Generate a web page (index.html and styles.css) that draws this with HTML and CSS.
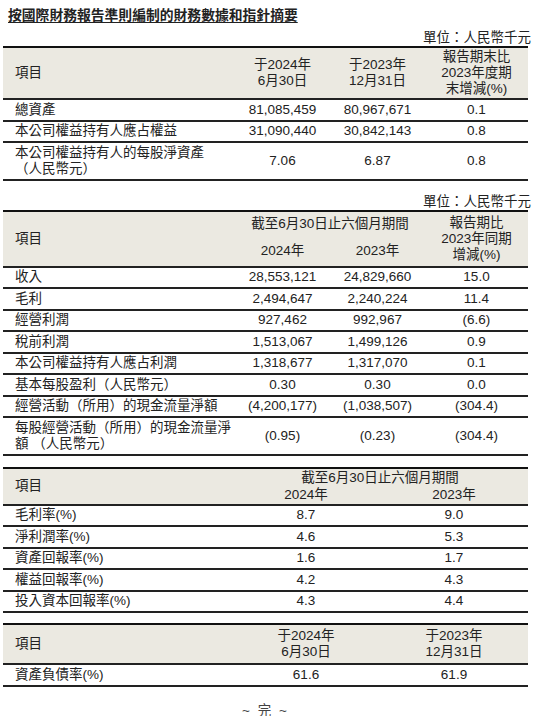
FILE: index.html
```html
<!DOCTYPE html>
<html lang="zh-Hant">
<head>
  <meta charset="UTF-8" />
  <meta name="viewport" content="width=device-width, initial-scale=1.0" />
  <title>財務數據和指針摘要</title>
  <link rel="stylesheet" href="styles.css">
</head>
<body>
  <div class="page">
    <h1 class="title">按國際財務報告準則編制的財務數據和指針摘要</h1>

    <!-- 資產 -->
    <div class="unit">單位：人民幣千元</div>
    <table class="fin four balance">
      <colgroup>
        <col class="c-label"><col class="c-num"><col class="c-num"><col class="c-chg">
      </colgroup>
      <thead>
        <tr>
          <th class="label">項目</th>
          <th>于2024年<br>6月30日</th>
          <th>于2023年<br>12月31日</th>
          <th>報告期末比<br>2023年度期<br>末增減(%)</th>
        </tr>
      </thead>
      <tbody>
        <tr><td class="label">總資產</td><td>81,085,459</td><td>80,967,671</td><td>0.1</td></tr>
        <tr><td class="label">本公司權益持有人應占權益</td><td>31,090,440</td><td>30,842,143</td><td>0.8</td></tr>
        <tr><td class="label">本公司權益持有人的每股淨資產<br>（人民幣元）</td><td>7.06</td><td>6.87</td><td>0.8</td></tr>
      </tbody>
    </table>

    <!-- 損益 -->
    <div class="unit second">單位：人民幣千元</div>
    <table class="fin four income">
      <colgroup>
        <col class="c-label"><col class="c-num"><col class="c-num"><col class="c-chg">
      </colgroup>
      <thead>
        <tr>
          <th class="label" rowspan="2">項目</th>
          <th colspan="2" class="period">截至6月30日止六個月期間</th>
          <th rowspan="2">報告期比<br>2023年同期<br>增減(%)</th>
        </tr>
        <tr>
          <th class="year">2024年</th>
          <th class="year">2023年</th>
        </tr>
      </thead>
      <tbody>
        <tr><td class="label">收入</td><td>28,553,121</td><td>24,829,660</td><td>15.0</td></tr>
        <tr><td class="label">毛利</td><td>2,494,647</td><td>2,240,224</td><td>11.4</td></tr>
        <tr><td class="label">經營利潤</td><td>927,462</td><td>992,967</td><td>(6.6)</td></tr>
        <tr><td class="label">稅前利潤</td><td>1,513,067</td><td>1,499,126</td><td>0.9</td></tr>
        <tr><td class="label">本公司權益持有人應占利潤</td><td>1,318,677</td><td>1,317,070</td><td>0.1</td></tr>
        <tr><td class="label">基本每股盈利（人民幣元）</td><td>0.30</td><td>0.30</td><td>0.0</td></tr>
        <tr><td class="label">經營活動（所用）的現金流量淨額</td><td>(4,200,177)</td><td>(1,038,507)</td><td>(304.4)</td></tr>
        <tr><td class="label">每股經營活動（所用）的現金流量淨<br>額 （人民幣元）</td><td>(0.95)</td><td>(0.23)</td><td>(304.4)</td></tr>
      </tbody>
    </table>

    <!-- 比率 -->
    <table class="fin three ratios">
      <colgroup>
        <col class="c-label3"><col class="c-val"><col class="c-val">
      </colgroup>
      <thead>
        <tr>
          <th class="label" rowspan="2">項目</th>
          <th colspan="2" class="period">截至6月30日止六個月期間</th>
        </tr>
        <tr>
          <th class="year">2024年</th>
          <th class="year">2023年</th>
        </tr>
      </thead>
      <tbody>
        <tr><td class="label">毛利率(%)</td><td>8.7</td><td>9.0</td></tr>
        <tr><td class="label">淨利潤率(%)</td><td>4.6</td><td>5.3</td></tr>
        <tr><td class="label">資產回報率(%)</td><td>1.6</td><td>1.7</td></tr>
        <tr><td class="label">權益回報率(%)</td><td>4.2</td><td>4.3</td></tr>
        <tr><td class="label">投入資本回報率(%)</td><td>4.3</td><td>4.4</td></tr>
      </tbody>
    </table>

    <!-- 負債 -->
    <table class="fin three gearing">
      <colgroup>
        <col class="c-label3"><col class="c-val"><col class="c-val">
      </colgroup>
      <thead>
        <tr>
          <th class="label">項目</th>
          <th>于2024年<br>6月30日</th>
          <th>于2023年<br>12月31日</th>
        </tr>
      </thead>
      <tbody>
        <tr><td class="label">資產負債率(%)</td><td>61.6</td><td>61.9</td></tr>
      </tbody>
    </table>

    <div class="end">~ 完 ~</div>
  </div>
</body>
</html>
```

FILE: styles.css
```css
* {
  box-sizing: border-box;
}

body {
  margin: 0;
  background: #fff;
  color: #222;
  font-family: "Liberation Sans", "Noto Sans CJK TC", sans-serif;
  font-size: 13.5px;
}

.page {
  width: 531px;
  padding: 8px 0 0 3px;
}

.title {
  margin: 0 0 0 5px;
  font-size: 13.8px;
  font-weight: bold;
  line-height: 16px;
  text-decoration: underline;
  text-underline-offset: 2px;
}

.unit {
  text-align: right;
  line-height: 16px;
  margin-top: 4px;
  height: 18px;
  padding-top: 2px;
}

.unit.second {
  margin-top: 11px;
}

.fin {
  width: 525px;
  border-collapse: collapse;
  table-layout: fixed;
  border-top: 2px solid #111;
}

.fin th,
.fin td {
  padding: 1.75px 0;
  line-height: 16px;
  text-align: center;
  font-weight: normal;
  border-bottom: 2px solid #222;
}

.fin thead th {
  background-color: #ebe9e1;
  padding: 3px 0;
}

.balance thead th {
  padding: 1px 0;
}

.fin .label {
  text-align: left;
  padding-left: 12px;
}

.fin th.period {
  border-bottom: none;
  padding: 4px 0 0;
}

.income th.year {
  padding: 9px 0 6px;
}

.c-label { width: 232px; }
.c-num { width: 95px; }
.c-chg { width: 103px; }

.c-label3 { width: 229px; }
.c-val { width: 148px; }

.ratios {
  margin-top: 11px;
}

.ratios th.period {
  padding: 1px 0 0;
}

.ratios th.year {
  padding: 1px 0 1px;
}

.gearing {
  margin-top: 10px;
}

.end {
  text-align: center;
  width: 525px;
  margin-top: 17px;
  line-height: 13px;
  letter-spacing: 2px;
  color: #444;
}
```
